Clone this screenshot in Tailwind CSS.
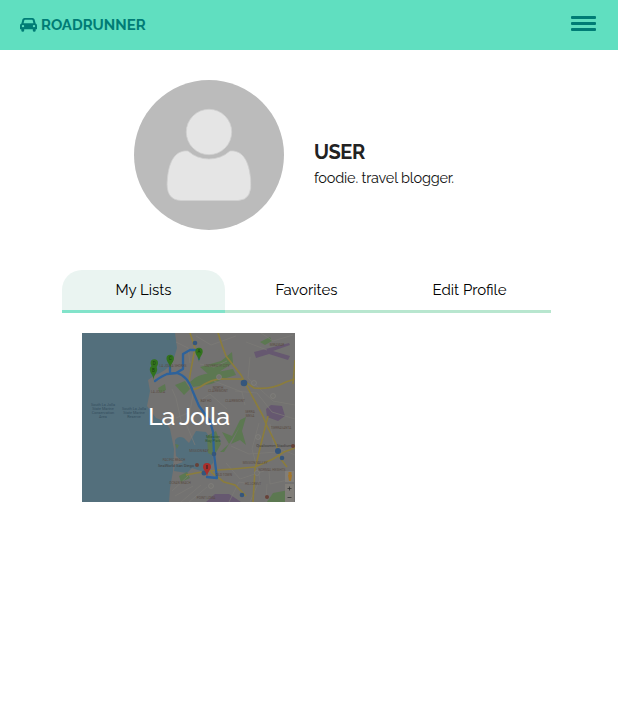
<!DOCTYPE html>
<html lang="en">
<head>
<meta charset="utf-8">
<title>Roadrunner</title>
<script src="https://cdn.jsdelivr.net/npm/@tailwindcss/browser@4"></script>
</head>
<body class="bg-white text-black font-[Raleway,Lato,sans-serif] h-[709px] overflow-hidden">
<header class="h-[50px] bg-[#60dfc0] flex items-center justify-between pl-5 pr-[22px] text-[#007c75]">
  <a class="flex items-center gap-[4px]">
    <svg class="w-[17px] h-[14px]" viewBox="0 0 17 14"><path fill="currentColor" fill-rule="evenodd" d="M4.500 0h8q1.700 0 2.100 1.500l1 3.900Q17 5.900 17 7.500v3.200q0 .5-.5.5h-.8v1.200a1.450 1.450 0 0 1-2.900 0v-1.200H4.200v1.200a1.450 1.450 0 0 1-2.900 0v-1.200H.5q-.5 0-.5-.5V7.500Q0 5.900 1.400 5.400l1-3.900Q2.800 0 4.500 0ZM4.900 1.800q-.5 0-.6.4l-.7 3h9.800l-.7-3q-.1-.4-.6-.4ZM3 6.900a1.200 1.200 0 1 0 0 2.400 1.200 1.200 0 0 0 0-2.400Zm11 0a1.200 1.200 0 1 0 0 2.400 1.200 1.200 0 0 0 0-2.400Z"/></svg>
    <span class="text-[15px] leading-5 font-bold">ROADRUNNER</span>
  </a>
  <div class="w-[25px] flex flex-col gap-[3px] -mt-[3px]">
    <span class="h-[3px] rounded-[1px] bg-current"></span>
    <span class="h-[3px] rounded-[1px] bg-current"></span>
    <span class="h-[3px] rounded-[1px] bg-current"></span>
  </div>
</header>
<section class="pt-[30px] pl-[134px] flex gap-[30px]">
  <svg class="size-[150px] shrink-0" viewBox="0 0 150 150">
    <circle cx="75" cy="75" r="75" fill="#bbb"/>
    <g fill="#e5e5e5" stroke="#d0d0d0" stroke-width=".8">
      <circle cx="75" cy="52" r="22.700"/>
      <path d="M54 71Q63 79 75 79T96 71C108 70 115 80 116.600 99Q119 120 104 120.500H47Q31 120 33.400 99C35 80 42 70 54 71Z"/>
    </g>
  </svg>
  <div class="pt-[60px]">
    <h1 class="text-[20px] leading-6 font-bold text-[#222] tracking-[-0.450px]">USER</h1>
    <p class="text-[14.500px] leading-5 mt-1 text-[#111] tracking-[-0.180px]">foodie. travel blogger.</p>
  </div>
</section>
<nav class="mt-10 ml-[62px] w-[489px] h-[43px] grid grid-cols-3 text-center text-[15px] leading-10">
  <a class="bg-[#eaf4f1] rounded-t-[20px] relative">My Lists<span class="absolute left-0 bottom-0 w-full h-[3px] bg-[#82e3ca]"></span></a>
  <a class="border-b-3 border-[#b8e6cf]">Favorites</a>
  <a class="border-b-3 border-[#b8e6cf]">Edit Profile</a>
</nav>
<main class="pt-5 pl-[82px]">
  <a class="relative block w-[213px] h-[169px] overflow-hidden">
    <svg class="block w-[213px] h-[169px] font-[Roboto,sans-serif]" viewBox="0 0 213 169">
      <path fill="#737271" d="M0 0H213V169H0Z"/>
      <path fill="#536f7c" d="M0 0H93L95 15 91 28Q85 38 73 42L66 47 68 58 65 73 74 85Q84 88 88 96L92 116 91 138 88 155 87 169H0Z"/>
      <path fill="#536f7c" d="M93 107Q96 102 102 105L107 110 114 98 124 99 130 108 131 130 122 139 110 135 105 140 92 138 93 132 101 129 94 123Z"/>
      <g fill="#5c7851">
        <path d="M108 49Q115 41 130 40L151 36 154 42 141 46 129 51 111 54Z M118 34 139 28 150 19 151 30 137 39 126 41Z M140 99 150 103 158 87 164 84 160 98 164 112 158 107 149 111 158 93 149 108 142 119 138 119 147 111Z M125 103 134 98 139 111 132 123 126 120Z M191 160 207 157 206 169H185Z M76 55 83 51 84 57 78 60Z M93 52 103 48 108 56 102 62Z M97 143 105 139 108 145 99 149Z M93 111 97 112 95 116Z M178 9 188 4 190 8 183 12Z"/>
      </g>
      <g fill="#665870">
        <path d="M172 19 207 10 208 12 191 18 208 23 206 27 187 21 174 25Z M184 76 189 72 200 73 203 83 196 88 185 84Z M124 169 133 161 147 161 159 169Z"/>
      </g>
      <g fill="none" stroke="#7c7b77" stroke-width=".7">
        <path d="M94 9 106 15 108 30M100 92 94 65 90 56M94 85 108 79 112 55M105 93 113 112M118 31 132 34 145 28M168 24 166 45 191 68 213 72M153 58 175 60 190 79 213 86M177 90 170 116 178 146 168 169M188 91 192 113 213 122M149 113 167 121 195 119M144 130 158 146 182 138M90 158 106 143M93 163 111 153M99 169 119 152M107 169 125 154M147 169 157 149 169 151M187 138 188 151 206 147M184 169 185 151M114 3 129 12 154 3M179 0 191 8 211 2M164 9 185 17M132 48 160 59 163 72M114 70 128 61 145 76"/>
      </g>
      <g fill="none" stroke="#8b7d3c" stroke-width="1.600">
        <path d="M108 0 113 15 108 42 107 50Q108 60 118 54Q131 45 143 46H159L172 55Q189 57 204 49L213 46M136 0Q140 13 144 23L159 42 169 61 181 83M181 83 184 91 194 111 198 125 205 134M186 83 179 111 173 136 171 169M104 142Q127 137 151 136L173 134 191 126 202 119 213 115M129 139 142 149 153 152 164 163M213 27 211 51"/>
      </g>
      <g fill="none" stroke="#2d629b" stroke-width="2.300" stroke-linecap="round" stroke-linejoin="round">
        <path d="M73 48Q80 43 85 41L95 40Q106 43 111 59L117 73 128 88 131 99 132 121 135 145 125 144M88 40V29M94 40 101 36 101 21 108 17H117V26"/>
      </g>
      <g fill="#35567c">
        <circle cx="113" cy="10" r="2.300"/><circle cx="162" cy="50" r="3.300"/><circle cx="132" cy="121" r="2.300"/><circle cx="196" cy="118" r="3"/><circle cx="200" cy="125" r="2.300"/><circle cx="160" cy="162" r="2.300"/><circle cx="122" cy="140" r="2.500"/>
      </g>
      <g fill="#757471" stroke="#85837f" stroke-width=".6">
        <circle cx="137" cy="44" r="2.500"/><circle cx="172" cy="50" r="2.500"/><circle cx="191" cy="63" r="2.500"/><circle cx="176" cy="104" r="2.500"/><circle cx="175" cy="140" r="2.500"/><circle cx="129" cy="153" r="2.500"/>
      </g>
      <g fill="#32731d">
        <path id="pin" d="M71.500 47C71.200 41.500 67.800 40 67.800 36.500A3.700 3.700 0 0 1 75.200 36.500C75.200 40 71.800 41.500 71.500 47Z"/>
        <use href="#pin" x=".8" y="-6.500"/><use href="#pin" x="16.700" y="-11"/><use href="#pin" x="45.500" y="-18"/>
      </g>
      <g fill="#173c11" font-size="4.500" text-anchor="middle">
        <text x="71.500" y="38.500">B</text><text x="72.300" y="31.500">D</text><text x="88.200" y="27">C</text><text x="117" y="20">A</text>
      </g>
      <path fill="#a92f2c" d="M125 144C124.500 138.500 121 137 121 134A4 4 0 0 1 129 134C129 137 125.500 138.500 125 144Z"/>
      <path fill="#222" d="M124.500 132h1v4h-1Z"/>
      <g fill="#344e5d" font-size="3.800" text-anchor="middle">
        <text x="21" y="73">South La Jolla</text><text x="21" y="77">State Marine</text><text x="21" y="81">Conservation</text><text x="21" y="85">Area</text>
        <text x="52" y="77">South La Jolla</text><text x="52" y="81">State Marine</text><text x="52" y="85">Reserve</text>
      </g>
      <g fill="#5a4c43" font-size="3.200" text-anchor="middle">
        <text x="91" y="34">LA JOLLA SHORES</text><text x="76" y="60">LA JOLLA</text><text x="135" y="34">UNIVERSITY CITY</text><text x="195" y="13">MIRAMAR</text><text x="136" y="56">NORTH</text><text x="136" y="59">CLAIREMONT</text><text x="124" y="69">BAY HO</text><text x="153" y="69">CLAIREMONT</text><text x="168" y="80">SERRA</text><text x="168" y="84">MESA</text><text x="199" y="96">TIERRASANTA</text><text x="173" y="131">MISSION VALLEY</text><text x="190" y="138">NORMAL HEIGHTS</text><text x="171" y="152">HILLCREST</text><text x="124" y="166">POINT LOMA</text><text x="92" y="128">PACIFIC BEACH</text><text x="98" y="151">OCEAN BEACH</text><text x="142" y="143">OLD TOWN</text><text x="117" y="119">MISSION BAY</text>
      </g>
      <g fill="#403d3b" font-size="4" text-anchor="middle">
        <text x="94" y="134">SeaWorld San Diego</text><text x="192" y="114">Qualcomm Stadium</text><text x="131" y="105" fill="#315936">Mission</text><text x="131" y="109" fill="#315936">Bay Park</text>
      </g>
      <g fill="#674238"><circle cx="115" cy="132" r="2"/><circle cx="211" cy="113" r="2"/><circle cx="185" cy="164" r="2"/></g>
      <path fill="#817e79" d="M203 138h9v11h-9ZM203 151h9v18h-9Z"/>
      <path fill="#a1762e" d="M206 142h4l-1 6h-2ZM206.500 139h3v3h-3Z"/>
      <path stroke="#333" stroke-width=".8" d="M205.500 155.500h4M207.500 153.500v4M205.500 164.500h4"/>
    </svg>
    <span class="absolute inset-0 flex items-center justify-center pb-[2px] text-white text-[25px] font-medium tracking-[-1px]">La Jolla</span>
  </a>
</main>
</body>
</html>
